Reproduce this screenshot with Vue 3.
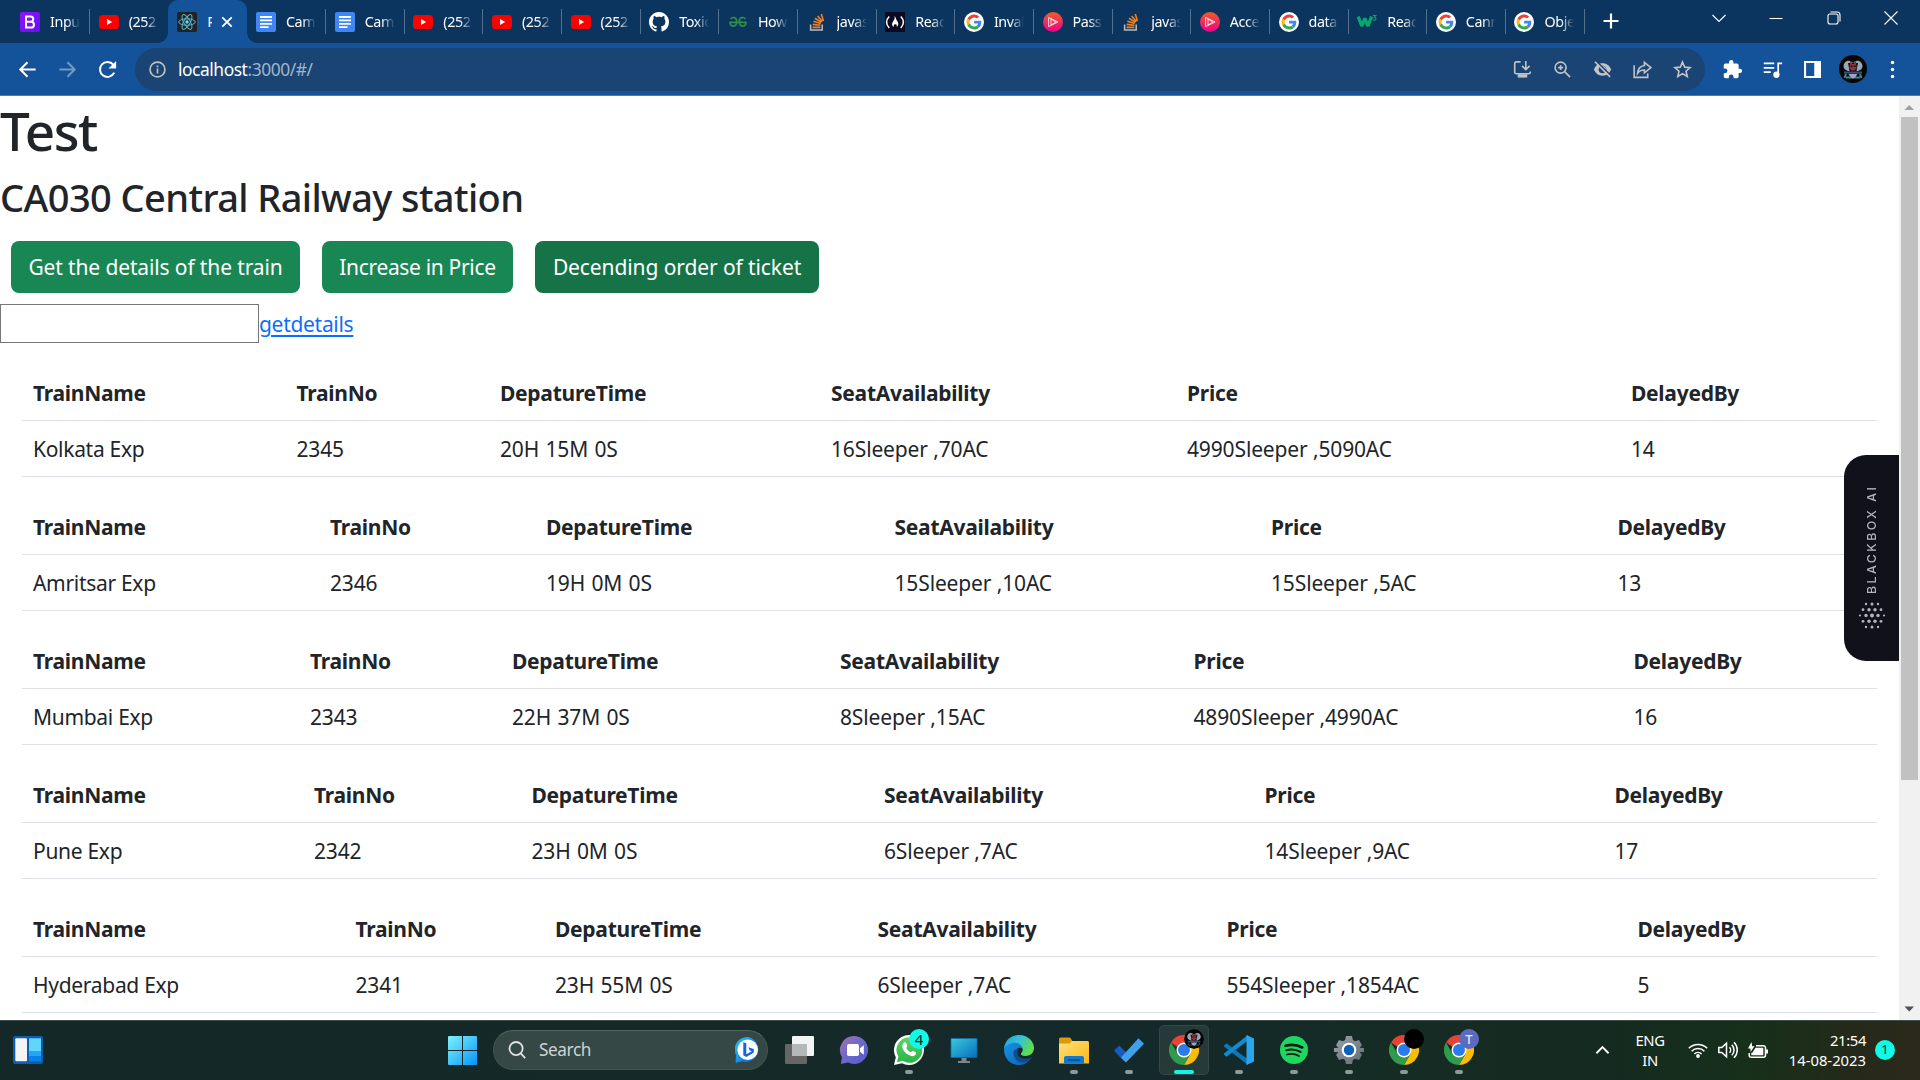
<script setup>
const tabs = [
  { icon: 'bootstrap', title: 'Inpu' },
  { icon: 'youtube', title: '(252' },
  { icon: 'react', title: 'R', active: true },
  { icon: 'docs', title: 'Cam' },
  { icon: 'docs', title: 'Cam' },
  { icon: 'youtube', title: '(252' },
  { icon: 'youtube', title: '(252' },
  { icon: 'youtube', title: '(252' },
  { icon: 'github', title: 'Toxic' },
  { icon: 'geeks', title: 'How' },
  { icon: 'stack', title: 'javas' },
  { icon: 'fcc', title: 'Reac' },
  { icon: 'google', title: 'Inval' },
  { icon: 'plural', title: 'Pass' },
  { icon: 'stack', title: 'javas' },
  { icon: 'plural', title: 'Acce' },
  { icon: 'google', title: 'data' },
  { icon: 'w3', title: 'Reac' },
  { icon: 'google', title: 'Cann' },
  { icon: 'google', title: 'Obje' },
]

const headings = ['TrainName', 'TrainNo', 'DepatureTime', 'SeatAvailability', 'Price', 'DelayedBy']

const trains = [
  { cols: [263.5, 203.5, 331, 356, 444, 257], cells: ['Kolkata Exp', '2345', '20H 15M 0S', '16Sleeper ,70AC', '4990Sleeper ,5090AC', '14'] },
  { cols: [297, 216, 348.5, 376.5, 346.5, 270.5], cells: ['Amritsar Exp', '2346', '19H 0M 0S', '15Sleeper ,10AC', '15Sleeper ,5AC', '13'] },
  { cols: [277, 202, 328, 353.5, 440, 254.5], cells: ['Mumbai Exp', '2343', '22H 37M 0S', '8Sleeper ,15AC', '4890Sleeper ,4990AC', '16'] },
  { cols: [281, 217.5, 352.5, 380.5, 350, 273.5], cells: ['Pune Exp', '2342', '23H 0M 0S', '6Sleeper ,7AC', '14Sleeper ,9AC', '17'] },
  { cols: [322.5, 199.5, 322.5, 349, 411, 250.5], cells: ['Hyderabad Exp', '2341', '23H 55M 0S', '6Sleeper ,7AC', '554Sleeper ,1854AC', '5'] },
]

const apps = [
  { icon: 'taskview' },
  { icon: 'chat' },
  { icon: 'whatsapp', running: true, badge: 'count', label: '4' },
  { icon: 'pc' },
  { icon: 'edge' },
  { icon: 'folder', running: true },
  { icon: 'todo', running: true },
  { icon: 'chrome', running: true, active: true, badge: 'avatar' },
  { icon: 'vscode', running: true },
  { icon: 'spotify', running: true },
  { icon: 'settings', running: true },
  { icon: 'chrome', running: true, badge: 'black', label: '' },
  { icon: 'chrome', running: true, badge: 'letter', label: 'T' },
]

const dots = [
  [8, 2, 1.2], [14, 2, 1.5], [20, 2, 1.2],
  [5, 7.7, 1.4], [11, 7.7, 1.7], [17, 7.7, 1.7], [23, 7.7, 1.4],
  [2, 13.5, 1.1], [8, 13.5, 1.7], [14, 13.5, 2], [20, 13.5, 1.7], [26, 13.5, 1.1],
  [5, 19.3, 1.4], [11, 19.3, 1.7], [17, 19.3, 1.7], [23, 19.3, 1.4],
  [8, 25, 1.2], [14, 25, 1.5], [20, 25, 1.2],
]
</script>

<template>
  <div class="screen">
    <svg class="sprite" width="0" height="0" aria-hidden="true">
      <defs>
        <linearGradient id="gPurple" x1="0" y1="0" x2="1" y2="1"><stop offset="0" stop-color="#9013fe" /><stop offset="1" stop-color="#6610f2" /></linearGradient>
        <linearGradient id="gPlural" x1="0" y1="0" x2="0" y2="1"><stop offset="0" stop-color="#f15b2a" /><stop offset="1" stop-color="#ec008c" /></linearGradient>
        <linearGradient id="gWin" x1="0" y1="0" x2="1" y2="1"><stop offset="0" stop-color="#7df3fb" /><stop offset="1" stop-color="#0595fb" /></linearGradient>
        <linearGradient id="gBing" x1="0" y1="0" x2="1" y2="1"><stop offset="0" stop-color="#21c8f6" /><stop offset="1" stop-color="#1257d8" /></linearGradient>
        <linearGradient id="gChat" x1="0" y1="0" x2="1" y2="1"><stop offset="0" stop-color="#a86fb0" /><stop offset=".45" stop-color="#6f6ac9" /><stop offset="1" stop-color="#5558cf" /></linearGradient>
        <linearGradient id="gWa" x1="0" y1="0" x2="0" y2="1"><stop offset="0" stop-color="#62d36b" /><stop offset="1" stop-color="#28b446" /></linearGradient>
        <linearGradient id="gPc" x1="0" y1="0" x2="1" y2="1"><stop offset="0" stop-color="#35cbd6" /><stop offset="1" stop-color="#0a6dc2" /></linearGradient>
        <linearGradient id="gEdgeTop" x1="0" y1="0" x2="1" y2=".5"><stop offset="0" stop-color="#1f9fe0" /><stop offset=".5" stop-color="#35c1d8" /><stop offset="1" stop-color="#62dc4c" /></linearGradient>
        <linearGradient id="gEdgeLow" x1="0" y1="0" x2="1" y2="1"><stop offset="0" stop-color="#1793e6" /><stop offset="1" stop-color="#0b5fae" /></linearGradient>
        <linearGradient id="gFolder" x1="0" y1="0" x2="1" y2="1"><stop offset="0" stop-color="#ffe07a" /><stop offset="1" stop-color="#fbb917" /></linearGradient>
        <linearGradient id="gGear" x1="0" y1="0" x2="1" y2="1"><stop offset="0" stop-color="#9aa2aa" /><stop offset="1" stop-color="#626a74" /></linearGradient>
      </defs>

      <symbol id="i-bootstrap" viewBox="0 0 20 20">
        <rect width="20" height="20" rx="2" fill="url(#gPurple)" />
        <path fill="none" stroke="#fff" stroke-width="2" d="M6 4.4h4.6a2.6 2.6 0 0 1 0 5.3H6m0 0h5a2.9 2.9 0 0 1 0 5.9H6zM6 3.5v13" />
      </symbol>
      <symbol id="i-youtube" viewBox="0 0 20 20">
        <rect y="3" width="20" height="14" rx="3.6" fill="#f00" />
        <path fill="#fff" d="M8 7l5.2 3L8 13z" />
      </symbol>
      <symbol id="i-react" viewBox="0 0 20 20">
        <rect width="20" height="20" rx="2" fill="#222" />
        <g fill="none" stroke="#53b7cf" stroke-width="1">
          <ellipse cx="10" cy="10" rx="8.3" ry="3.2" />
          <ellipse cx="10" cy="10" rx="8.3" ry="3.2" transform="rotate(60 10 10)" />
          <ellipse cx="10" cy="10" rx="8.3" ry="3.2" transform="rotate(120 10 10)" />
        </g>
        <circle cx="10" cy="10" r="1.7" fill="#61dafb" />
      </symbol>
      <symbol id="i-docs" viewBox="0 0 20 20">
        <rect width="20" height="20" rx="2" fill="#4285f4" />
        <path stroke="#fff" stroke-width="1.8" d="M4 5h12M4 8.4h12M4 11.8h12M4 15.2h8.5" />
      </symbol>
      <symbol id="i-github" viewBox="0 0 16 16">
        <path fill="#fff" d="M8 0C3.58 0 0 3.58 0 8c0 3.54 2.29 6.53 5.47 7.59.4.07.55-.17.55-.38 0-.19-.01-.82-.01-1.49-2.01.37-2.53-.49-2.69-.94-.09-.23-.48-.94-.82-1.13-.28-.15-.68-.52-.01-.53.63-.01 1.08.58 1.23.82.72 1.21 1.87.87 2.33.66.07-.52.28-.87.51-1.07-1.78-.2-3.64-.89-3.64-3.95 0-.87.31-1.59.82-2.15-.08-.2-.36-1.02.08-2.12 0 0 .67-.21 2.2.82.64-.18 1.32-.27 2-.27s1.36.09 2 .27c1.53-1.04 2.2-.82 2.2-.82.44 1.1.16 1.92.08 2.12.51.56.82 1.27.82 2.15 0 3.07-1.87 3.75-3.65 3.95.29.25.54.73.54 1.48 0 1.07-.01 1.93-.01 2.2 0 .21.15.46.55.38A8.01 8.01 0 0 0 16 8c0-4.42-3.58-8-8-8z" />
      </symbol>
      <symbol id="i-geeks" viewBox="0 0 20 20">
        <path fill="none" stroke="#2f8d46" stroke-width="1.7" d="M1.2 10.4h17.6M2.6 7.2a3.2 3.2 0 0 1 6 1.400v2.200a3.300 3.300 0 0 1-6.600 0M17.400 7.200a3.200 3.200 0 0 0-6 1.400v2.200a3.300 3.300 0 0 0 6.600 0" />
      </symbol>
      <symbol id="i-stack" viewBox="0 0 20 20">
        <path fill="none" stroke="#bcbbbb" stroke-width="1.5" d="M3.6 12.5v5.6h11.6v-5.6" />
        <path fill="none" stroke="#f48024" stroke-width="1.6" d="M5.500 15.400h7.800M5.700 12.400l7.600.9M6.400 9.300l7.300 2.200M8 6.300l6.500 3.900M10.700 3.900l4.700 5.600M14.300 2l2.100 7" />
      </symbol>
      <symbol id="i-fcc" viewBox="0 0 20 20">
        <rect width="20" height="20" fill="#0a0a23" />
        <path fill="none" stroke="#fff" stroke-width="1.5" d="M4.2 4.500Q-1 10 4.200 16M15.800 4.500Q21 10 15.800 16" />
        <path fill="#fff" d="M9.600 4c1.600 1.600 1.200 3.200 2.400 4.800 1.400 1.900 2.200 4.200-.4 6.200.6-1.500 0-2.500-.8-3-.2.8-.9.8-1 .1-1.300 1-1.300 2.200-.8 3.100-2.400-1.200-2.500-3.700-.9-5.700C9.300 7.900 10 6.500 9.600 4z" />
      </symbol>
      <symbol id="i-google" viewBox="0 0 20 20">
        <circle cx="10" cy="10" r="10" fill="#fff" />
        <g transform="translate(2.600 2.500) scale(.312)">
          <path fill="#EA4335" d="M24 9.500c3.540 0 6.710 1.220 9.210 3.600l6.850-6.850C35.900 2.380 30.470 0 24 0 14.620 0 6.510 5.380 2.560 13.220l7.980 6.190C12.430 13.720 17.740 9.500 24 9.500z" />
          <path fill="#4285F4" d="M46.980 24.550c0-1.570-.15-3.090-.38-4.550H24v9.020h12.940c-.58 2.960-2.260 5.480-4.780 7.180l7.730 6c4.510-4.180 7.090-10.360 7.090-17.650z" />
          <path fill="#FBBC05" d="M10.530 28.590c-.48-1.450-.76-2.990-.76-4.590s.27-3.140.76-4.590l-7.980-6.190C.92 16.460 0 20.120 0 24c0 3.880.92 7.540 2.560 10.780l7.970-6.190z" />
          <path fill="#34A853" d="M24 48c6.480 0 11.930-2.130 15.890-5.810l-7.730-6c-2.150 1.450-4.920 2.300-8.160 2.300-6.260 0-11.570-4.220-13.470-9.910l-7.980 6.190C6.510 42.620 14.620 48 24 48z" />
        </g>
      </symbol>
      <symbol id="i-plural" viewBox="0 0 20 20">
        <circle cx="10" cy="10" r="10" fill="url(#gPlural)" />
        <path fill="none" stroke="#fff" stroke-width="1" stroke-opacity=".8" d="M5.600 5.400v9.200L15 10zM8 6.800v6.400M8 7l4.800 3L8 13" />
      </symbol>
      <symbol id="i-w3" viewBox="0 0 20 20">
        <path fill="none" stroke="#04aa6d" stroke-width="3.300" stroke-linejoin="bevel" d="M1.200 4.500l3.600 9.500L7.900 6.500 11 14l3.600-9.500" />
        <path fill="none" stroke="#04aa6d" stroke-width="1.100" d="M16 3.500h2.800L17.300 5.200c2.200 0 2.200 3-.1 3-.7 0-1.200-.3-1.500-.7" />
      </symbol>

      <symbol id="i-chrome" viewBox="0 0 30 30">
        <path fill="#ea4335" d="M2 7.500A15 15 0 0 1 28 7.500H15L9 12z" />
        <path fill="#fbbc05" d="M28 7.500A15 15 0 0 1 15 30L21.500 18.700V7.500z" />
        <path fill="#2f9c4c" d="M2 7.500A15 15 0 0 0 15 30l6.500-11.300H8.500z" />
        <circle cx="15" cy="15" r="7.500" fill="#fff" />
        <circle cx="15" cy="15" r="6" fill="#2b7bea" />
      </symbol>
      <symbol id="i-taskview" viewBox="0 0 30 30">
        <rect x="1" y="9" width="22" height="20" rx="1" fill="#666" />
        <rect x="8" y="1" width="22" height="20" rx="1" fill="#f3f3f3" />
        <rect x="8" y="9" width="15" height="12" fill="#b5b8b8" />
      </symbol>
      <symbol id="i-chat" viewBox="0 0 30 30">
        <path fill="url(#gChat)" d="M15.500 1A14 14 0 1 1 9 27.600L1.800 29 3 22.200A14 14 0 0 1 15.500 1z" />
        <rect x="8" y="9" width="12" height="12" rx="1.800" fill="#fff" />
        <path fill="#fff" d="M21 13.200l3.800-3v9.600L21 16.800z" />
      </symbol>
      <symbol id="i-whatsapp" viewBox="0 0 30 30">
        <path fill="#fff" d="M15 0A15 15 0 1 1 8 28.300L0 30l1.800-7.800A15 15 0 0 1 15 0z" />
        <path fill="url(#gWa)" d="M15.200 2.200a12.800 12.800 0 1 1-6.500 23.600L3 27.200l1.400-5.500A12.800 12.800 0 0 1 15.200 2.200z" />
        <path fill="#fff" d="M10 7.700c.7-.5 1.800-.5 2.200.3l1.100 2.700c.2.700-.9 1.700-1 2.200.8 1.800 2.500 3.500 4.600 4.400.6-.2 1.300-1.700 2-1.500l2.800 1.400c.7.500.3 2-.4 2.800-1.700 1.700-4 1.400-6.500.1-3.200-1.700-5.400-4.400-6.300-7.200-.5-2.200 0-4.200 1.500-5.200z" />
      </symbol>
      <symbol id="i-pc" viewBox="0 0 30 30">
        <path fill="#7c868d" d="M12.500 22h5v4h3.500v2H9v-2h3.500z" />
        <rect x="1.500" y="3" width="27" height="20" rx="1" fill="#105a92" />
        <rect x="2.300" y="3.800" width="25.400" height="18.400" fill="url(#gPc)" />
      </symbol>
      <symbol id="i-edge" viewBox="0 0 30 30">
        <path fill="url(#gEdgeLow)" d="M0 14C2 8 7 6.500 12 7.500c4 .8 7 3.500 7 6.500-2-2-6-1.500-7.500 1.500-2 6 4 10.500 9.500 9.500l5.500-1.500C23 29 18 30.500 13 30 5 29 0 22.500 0 14z" />
        <path fill="#124b8d" d="M9.500 17c-.5 7 6 13 13 9.700 2.500-1 4.500-2.800 5.500-4.700-5 3-12.500 2.500-14.500-2.500-1-3 .5-5 1.500-5.500-3-.5-5.200 1-5.500 3z" />
        <path fill="url(#gEdgeTop)" d="M0 14C.5 5.500 7 0 15 0c9 0 15 6.500 15 13 0 5-4 8-8.500 8-3.500 0-5-1-4.500-2.500 1.500-1.500 2.200-3.500 1.500-5.500C16 5.500 4 6 0 14z" />
      </symbol>
      <symbol id="i-folder" viewBox="0 0 30 30">
        <path fill="#dd9a07" d="M0 4a1.500 1.500 0 0 1 1.500-1.500H11L13.500 6H28l2 3H0z" />
        <path fill="url(#gFolder)" d="M0 8.500h10.500L13 6h15.500A1.500 1.500 0 0 1 30 7.500v21H0z" />
        <path fill="#1079cf" d="M5 28.500V23a2 2 0 0 1 2-2h16a2 2 0 0 1 2 2v5.500z" />
        <path stroke="#084b86" stroke-width="1.500" stroke-linecap="round" d="M9.500 25h11" />
      </symbol>
      <symbol id="i-todo" viewBox="0 0 30 30">
        <path fill="#185abd" d="M0 15.500L5.200 10.500l9.600 9.500-5.200 6z" />
        <path fill="#41a0ec" d="M7 22.500L24.500 3.200 30 8.800 12 27.500z" />
      </symbol>
      <symbol id="i-vscode" viewBox="0 0 30 30">
        <path fill="#0a78be" d="M0 10.500l2.500-2.300L24 24.500V30L0 11.500z" />
        <path fill="#1389d2" d="M0 19.500l2.500 2.300L24 5.500V0L0 18.500z" />
        <path fill="#2ba5ee" d="M22.500 0L30 3.500v23L22.500 30z" />
      </symbol>
      <symbol id="i-spotify" viewBox="0 0 30 30">
        <circle cx="15" cy="15" r="14" fill="#1ed760" />
        <path fill="none" stroke="#101b14" stroke-linecap="round" stroke-width="2.600" d="M6.500 10.800c6-1.700 11.500-1 16.800 1.700" />
        <path fill="none" stroke="#101b14" stroke-linecap="round" stroke-width="2.100" d="M7.300 15.300c5-1.400 9.700-.9 14.200 1.600" />
        <path fill="none" stroke="#101b14" stroke-linecap="round" stroke-width="1.800" d="M8 19.500c4.200-1.100 8.200-.7 12 1.500" />
      </symbol>
      <symbol id="i-settings" viewBox="0 0 30 30">
        <path fill="url(#gGear)" d="M12 1h6l.9 4 2.300 1.300L25 5l3 5.200-2.500 2.500L30 13v4l-4.500.3L28 19.800 25 25l-3.800-1.300-2.300 1.300-.9 4h-6l-.9-4-2.300-1.300L5 25l-3-5.200 2.500-2.500L0 17v-4l4.500-.3L2 10.200 5 5l3.800 1.300L11.100 5z" />
        <circle cx="15" cy="15" r="7.300" fill="#fff" />
        <circle cx="15" cy="15" r="5.200" fill="#0b62b8" />
      </symbol>
      <symbol id="i-avatar" viewBox="0 0 28 28">
        <circle cx="14" cy="14" r="14" fill="#050506" />
        <path fill="#97a9b5" d="M4.500 11C5 6 9 5 11 6l3 2 3-2c2-1 6 0 6.500 5 0 3-2 4-4.500 5h-10c-2.500-1-4.500-2-4.500-5z" />
        <path fill="#1a1016" d="M9 8h10l-1.500 8h-7z" />
        <path fill="#8c3542" d="M10.800 6h1.600l.6 3h2l.6-3h1.600l-.3 4 .9 2.500-2.300 3h-3l-2.300-3 .9-2.500z" />
        <path fill="#1a1016" d="M11.500 10.500h2v1.500h-2zM14.700 10.500h2v1.500h-2z" />
        <path fill="#3b4e78" d="M5 16.500h18v2.200H5z" />
        <path fill="none" stroke="#3b8e93" d="M5.500 23l1.500-4M22.500 23L21 19M7 22.500h14" />
        <path fill="#a5a4ba" d="M9.500 19h9l-2 3-2.500 1.500L11.500 22z" />
      </symbol>
    </svg>

    <header class="tabbar">
      <div class="tabs">
        <div v-for="(tab, i) in tabs" :key="i" class="tab" :class="{ active: tab.active, plain: i === 1 }">
          <svg class="favicon"><use :href="'#i-' + tab.icon" /></svg>
          <span class="title">{{ tab.title }}</span>
          <svg v-if="tab.active" class="close" viewBox="0 0 12 12"><path d="M1.300 1.300l9.400 9.400M10.700 1.300l-9.400 9.400" /></svg>
        </div>
      </div>
      <svg class="plus" viewBox="0 0 16 16"><path d="M8 .5v15M.5 8h15" /></svg>
      <div class="controls">
        <svg viewBox="0 0 16 16"><path d="M1.500 5L8 11.500 14.500 5" /></svg>
        <svg viewBox="0 0 16 16"><path d="M1.500 8.500h13" /></svg>
        <svg viewBox="0 0 16 16"><rect x="2" y="4" width="10" height="10" rx="2" /><path d="M4.500 2h6.500a3 3 0 0 1 3 3v6.500" /></svg>
        <svg viewBox="0 0 16 16"><path d="M1.500 1.500l13 13M14.500 1.500l-13 13" /></svg>
      </div>
    </header>

    <nav class="toolbar">
      <svg class="nav" viewBox="0 0 24 24"><path d="M20.500 12H5M12 4.500L4.500 12l7.500 7.500" /></svg>
      <svg class="nav dim" viewBox="0 0 24 24"><path d="M3.500 12H19M12 4.500l7.500 7.500-7.500 7.500" /></svg>
      <svg class="nav" viewBox="0 0 24 24"><path d="M19 15.300A7.800 7.800 0 1 1 18 7" /><path class="solid" d="M21 3v8h-8z" /></svg>
      <div class="omnibox">
        <svg class="info" viewBox="0 0 16 16"><circle cx="8" cy="8" r="7" /><path d="M8 7v4.700M8 4.200v1.700" /></svg>
        <span class="url">localhost<i>:3000/#/</i></span>
        <div class="actions">
          <svg viewBox="0 0 20 20"><path d="M8 2H3.500A1.700 1.700 0 0 0 1.800 3.700v9.100a1.700 1.700 0 0 0 1.700 1.700h13a1.700 1.700 0 0 0 1.700-1.700V12M13.500 1v8.500M9.500 6.200l4 4 4-4" /><path class="fill" d="M5 15h10v3.500H5z" /></svg>
          <svg viewBox="0 0 20 20"><circle cx="8" cy="8" r="5.800" /><path d="M12.500 12.500l5.500 5.500M8 5.400v5.200M5.400 8h5.200" /></svg>
          <svg viewBox="0 0 20 20"><path class="fill" d="M10 3.500c4.400 0 7.600 2.600 9 6.500-1.400 3.900-4.600 6.500-9 6.500S2.400 13.900 1 10c1.400-3.900 4.600-6.500 9-6.500z" /><circle class="eye" cx="10" cy="10" r="4" /><path d="M10 7.200a2.900 2.900 0 0 1 2.900 2.900" /><path class="cut" d="M3.200.8l16 16" /><path d="M2 1.800l16 16" /></svg>
          <svg viewBox="0 0 20 20"><path d="M1.200 5.500v12.800h14.300v-4" /><path d="M12 2.500l6.800 5.500-6.800 5.500v-3c-3.500-.2-5.500 1-7.200 3.500.4-4.500 2.700-7.600 7.200-8.200z" /></svg>
          <svg viewBox="0 0 20 20"><path d="M10 2.200l2.300 5.300 5.700.5-4.300 3.800 1.300 5.600-5-3-5 3 1.300-5.600L2 8l5.700-.5z" /></svg>
        </div>
      </div>
      <div class="extras">
        <svg viewBox="0 0 24 24"><path class="solid" d="M20.500 11H19V7a2 2 0 0 0-2-2h-4V3.500a2.500 2.500 0 0 0-5 0V5H4a2 2 0 0 0-2 2v3.800h1.500a2.700 2.700 0 0 1 0 5.400H2V20a2 2 0 0 0 2 2h3.800v-1.500a2.700 2.700 0 0 1 5.400 0V22H17a2 2 0 0 0 2-2v-4h1.500a2.500 2.500 0 0 0 0-5z" /></svg>
        <svg viewBox="0 0 24 24"><path d="M2 5h12M2 10h12M2 15h8M18.500 18V5H23" /><circle class="solid" cx="16.500" cy="18" r="3.600" /></svg>
        <svg viewBox="0 0 24 24"><path class="thick" d="M3.500 3.500h17v17h-17z" /><path class="solid" d="M14 3h7v18h-7z" /></svg>
        <svg class="avatar"><use href="#i-avatar" /></svg>
        <svg viewBox="0 0 24 24"><circle class="solid" cx="12" cy="4" r="2" /><circle class="solid" cx="12" cy="12" r="2" /><circle class="solid" cx="12" cy="20" r="2" /></svg>
      </div>
    </nav>

    <div class="viewport">
      <main class="page">
        <h1>Test</h1>
        <h2>CA030 Central Railway station</h2>
        <div class="buttons">
          <button class="btn b1">Get the details of the train</button>
          <button class="btn b2">Increase in Price</button>
          <button class="btn b3">Decending order of ticket</button>
        </div>
        <div class="lookup">
          <input type="text" />
          <a href="#/">getdetails</a>
        </div>
        <div class="tables">
          <table v-for="train in trains" :key="train.cells[0]">
            <colgroup>
              <col v-for="(w, c) in train.cols" :key="c" :style="{ width: w + 'px' }" />
            </colgroup>
            <thead>
              <tr><th v-for="h in headings" :key="h">{{ h }}</th></tr>
            </thead>
            <tbody>
              <tr><td v-for="cell in train.cells" :key="cell">{{ cell }}</td></tr>
            </tbody>
          </table>
        </div>
      </main>
      <div class="scrollbar">
        <svg viewBox="0 0 21 21"><path fill="#a0a0a0" d="M5.500 14h9.500l-4.750-5z" /></svg>
        <div class="thumb"></div>
        <svg viewBox="0 0 21 21"><path fill="#505050" d="M5.500 7.500h9.500l-4.750 5z" /></svg>
      </div>
      <aside class="blackbox">
        <span>BLACKBOX AI</span>
        <svg viewBox="0 0 28 27"><circle v-for="(d, i) in dots" :key="i" :cx="d[0]" :cy="d[1]" :r="d[2]" /></svg>
      </aside>
    </div>

    <footer class="taskbar">
      <svg class="widgets" viewBox="0 0 30 28">
        <rect width="30" height="28" rx="2" fill="#0c5fb0" />
        <rect x="2.300" y="2.300" width="11.700" height="23" rx="1" fill="#f4f4f4" />
        <path fill="#62d5fb" d="M16 2.300h12V15H16z" />
        <path fill="#25a5f5" d="M16 15h12v5H16z" />
        <path fill="#0883e8" d="M16 20h12v5.300H16z" />
      </svg>
      <svg class="start" viewBox="0 0 29 29"><path fill="url(#gWin)" d="M0 1a1 1 0 0 1 1-1h13v14H0zM15 0h13a1 1 0 0 1 1 1v13H15zM0 15h14v14H1a1 1 0 0 1-1-1zM15 15h14v13a1 1 0 0 1-1 1H15z" /></svg>
      <div class="search">
        <svg class="lens" viewBox="0 0 20 20"><circle cx="8.500" cy="8.500" r="6.900" /><path d="M13.500 13.500l4.500 5" /></svg>
        <span>Search</span>
        <svg class="bing" viewBox="0 0 25 26">
          <path fill="url(#gBing)" d="M12.500 0A12.500 12.500 0 1 1 7 24.300L.6 26 1 18A12.500 12.500 0 0 1 12.500 0z" />
          <circle cx="12.700" cy="12.700" r="10.300" fill="#fff" />
          <path fill="#1464dc" d="M8.300 5.200l3 1v11l5.500-3-2.200-1-1.200-3 5.400 1.900v3.300L11.300 20l-3-1.800z" />
        </svg>
      </div>
      <div class="apps">
        <div v-for="(app, i) in apps" :key="i" class="app" :class="{ active: app.active, running: app.running }">
          <svg class="app-icon"><use :href="'#i-' + app.icon" /></svg>
          <svg v-if="app.badge === 'avatar'" class="badge"><use href="#i-avatar" /></svg>
          <span v-else-if="app.badge" class="badge" :class="app.badge">{{ app.label }}</span>
        </div>
      </div>
      <div class="tray">
        <svg class="up" viewBox="0 0 16 10"><path d="M1.500 8.500L8 2l6.500 6.500" /></svg>
        <div class="lang"><span>ENG</span><span>IN</span></div>
        <svg class="wifi" viewBox="0 0 20 16"><path d="M.8 6.200a13 13 0 0 1 18.400 0M3.600 9.200a9 9 0 0 1 12.800 0M6.400 11.900a5.200 5.200 0 0 1 7.200 0" /><circle cx="10" cy="14" r="1.900" /></svg>
        <svg class="volume" viewBox="0 0 20 18"><path d="M.8 6.500v5h3l4.700 4.300V2.200L3.800 6.500zM11.500 6.200a4 4 0 0 1 0 5.600M13.800 3.700a7.500 7.500 0 0 1 0 10.600M16 1.200a11 11 0 0 1 0 15.600" /></svg>
        <svg class="battery" viewBox="0 0 20 17"><path d="M8 3.700h7.500a2 2 0 0 1 2 2v7.600a2 2 0 0 1-2 2H3.200a2 2 0 0 1-2-2V11" /><path class="fill" d="M7.500 5.800h7.800v7.400H3.300v-2.500h1zM18 7.500h2v4h-2zM3.500 0L0 6.500h2.500V10l4-5.700H4.200z" /></svg>
        <div class="clock"><span>21:54</span><span class="date">14-08-2023</span></div>
        <span class="notice">1</span>
      </div>
    </footer>
  </div>
</template>

<style>
html, body { margin: 0; overflow: hidden; background: #fff; }
</style>

<style scoped>
* { box-sizing: border-box; }
.screen {
  width: 1920px;
  height: 1080px;
  display: flex;
  flex-direction: column;
  overflow: hidden;
  font-family: "Noto Sans", "Open Sans", sans-serif;
  color: #212529;
}
.sprite { position: absolute; }
svg { display: block; flex: none; }

/* browser chrome */
.tabbar { height: 43px; flex: none; display: flex; background: #0b355f; color: #fff; }
.tabs { display: flex; width: 1586px; padding-left: 11px; flex: none; }
.tab {
  position: relative;
  width: 78.67px;
  flex: none;
  display: flex;
  align-items: center;
  padding-left: 9px;
}
.tab::after {
  content: "";
  position: absolute;
  right: -.5px;
  top: 9px;
  width: 1px;
  height: 25px;
  background: #53708f;
}
.tab.plain::after { display: none; }
.favicon { width: 20px; height: 20px; }
.title {
  margin-left: 10px;
  width: 30px;
  overflow: hidden;
  white-space: nowrap;
  font-size: 14.3px;
  line-height: 22px;
  letter-spacing: -.4px;
  -webkit-mask-image: linear-gradient(90deg, #000 55%, transparent);
  mask-image: linear-gradient(90deg, #000 55%, transparent);
}
.tab.active { background: #145299; border-radius: 10px 10px 0 0; }
.tab.active .title { width: 5px; -webkit-mask-image: none; mask-image: none; }
.tab.active::before, .tab.active::after {
  content: "";
  position: absolute;
  top: auto;
  bottom: 0;
  width: 10px;
  height: 10px;
}
.tab.active::before { left: -10px; background: radial-gradient(circle at 0 0, transparent 9.5px, #145299 10px); }
.tab.active::after { right: -10px; background: radial-gradient(circle at 100% 0, transparent 9.5px, #145299 10px); }
.close { width: 12px; height: 12px; margin-left: 9px; fill: none; stroke: #fff; stroke-width: 1.9; }
.plus { width: 16px; height: 16px; margin: 13px 0 0 17px; stroke: #fff; stroke-width: 2.2; }
.controls { display: flex; margin-left: auto; margin-right: 21px; gap: 41.3px; padding-top: 10px; }
.controls svg { width: 16px; height: 16px; fill: none; stroke: #fff; stroke-width: 1.1; }

.toolbar {
  height: 53px;
  flex: none;
  display: flex;
  align-items: center;
  background: #145299;
  border-bottom: 1px solid #4a7ab4;
  padding-left: 16px;
}
.nav { width: 23px; height: 23px; fill: none; stroke: #fff; stroke-width: 2.1; margin-right: 17px; }
.nav.dim { stroke: #7299c6; }
.solid { fill: #fff; stroke: none; }
.omnibox {
  width: 1570px;
  height: 43px;
  flex: none;
  display: flex;
  align-items: center;
  border-radius: 22px;
  background: #194474;
  margin-left: -1px;
  padding: 0 13px 0 14px;
}
.info { width: 17px; height: 17px; fill: none; stroke: #c1c1c1; stroke-width: 1.6; }
.url { margin-left: 12px; font-size: 17.4px; line-height: 26px; color: #fff; letter-spacing: -.45px; }
.url i { font-style: normal; color: #a3b4c7; }
.actions { display: flex; gap: 21px; margin-left: auto; }
.actions svg { width: 19px; height: 19px; fill: none; stroke: #c1c3c6; stroke-width: 1.7; }
.actions .fill { fill: #c1c3c6; stroke: none; }
.actions .eye { fill: #194474; stroke: none; }
.actions .cut { stroke: #194474; }
.extras { display: flex; align-items: center; gap: 19px; margin-left: 17px; }
.extras svg { width: 21px; height: 21px; fill: none; stroke: #fff; stroke-width: 2; }
.extras .thick { stroke-width: 2.4; }
.extras .avatar { width: 28px; height: 28px; stroke: none; margin: 0 -3.5px; }

/* web page */
.viewport { position: relative; height: 924px; flex: none; display: flex; background: #fff; overflow: hidden; }
.page { width: 1899px; height: 924px; overflow: hidden; }
h1, h2 { margin: 0; font-weight: 500; white-space: nowrap; }
h1 { height: 66px; line-height: 70px; font-size: 53px; letter-spacing: -1.4px; margin-bottom: 11px; }
h2 { height: 47px; line-height: 48px; font-size: 38px; letter-spacing: -.6px; margin-bottom: 21px; }
.buttons { display: flex; gap: 22px; padding-left: 11px; }
.btn {
  height: 52px;
  border: 0;
  border-radius: 8px;
  background: #198754;
  color: #fff;
  font: 400 21px/50px "Noto Sans", sans-serif;
  padding: 0;
  white-space: nowrap;
}
.b1 { width: 289px; letter-spacing: -.13px; }
.b2 { width: 191px; letter-spacing: -.33px; }
.b3 { width: 284px; letter-spacing: -.1px; background: #157347; }
.lookup { display: flex; margin-top: 11px; height: 39px; }
.lookup input { width: 259px; height: 39px; border: 1px solid #767676; border-radius: 0; padding: 0; background: #fff; }
.lookup a {
  color: #0d6efd;
  font-size: 21px;
  line-height: 41px;
  letter-spacing: -.3px;
  text-decoration-thickness: 1.5px;
  text-underline-offset: 3px;
}
.tables { padding: 22px 22px 0; }
table { width: 1855px; table-layout: fixed; border-collapse: separate; border-spacing: 0; margin-bottom: 22px; }
th, td {
  height: 56px;
  padding: 2px 0 0 11px;
  border-bottom: 1px solid #dee2e6;
  text-align: left;
  font-size: 21px;
  line-height: 33px;
  white-space: nowrap;
}
th { font-weight: 700; letter-spacing: -.27px; }
td { letter-spacing: -.14px; }
td:first-child { letter-spacing: -.3px; }
td:nth-child(3) { word-spacing: 1px; }
.scrollbar { width: 21px; background: #f1f1f1; display: flex; flex-direction: column; }
.scrollbar svg { width: 21px; height: 21px; }
.thumb { height: 663px; width: 17px; margin: 0 auto auto 2px; background: #c1c1c1; }
.blackbox {
  position: absolute;
  left: 1844px;
  top: 359px;
  width: 55px;
  height: 206px;
  border-radius: 22px 0 0 22px;
  background: #11111a;
  display: flex;
  flex-direction: column;
  align-items: center;
}
.blackbox span {
  margin-top: 29px;
  height: 110px;
  writing-mode: vertical-rl;
  transform: rotate(180deg);
  font: 500 12.3px/16px Inter, sans-serif;
  letter-spacing: 2.5px;
  color: #b5b5b8;
  white-space: nowrap;
}
.blackbox svg { width: 28px; height: 27px; margin-top: 8px; fill: #b5b5b8; }

/* taskbar */
.taskbar {
  height: 60px;
  flex: none;
  display: flex;
  align-items: center;
  padding-bottom: 1px;
  border-top: 1px solid #3d4f4a;
  background: linear-gradient(90deg, #142927 0, #152a28 42%, #14292a 60%, #152c24 74%, #152a20 84%, #16301a 91%, #26291a 97%, #2b291b 100%);
  color: #fff;
}
.widgets { width: 30px; height: 28px; margin-left: 13px; }
.start { width: 29px; height: 29px; margin-left: 405px; }
.search {
  width: 275px;
  height: 40px;
  flex: none;
  margin-left: 16px;
  border-radius: 20px;
  background: #354845;
  border: 1px solid #43544f;
  border-top-color: #55645f;
  display: flex;
  align-items: center;
  padding: 0 7px 0 14px;
}
.lens { width: 19px; height: 20px; fill: none; stroke: #dfe3e2; stroke-width: 1.9; }
.search span { margin-left: 12px; font-size: 17.2px; line-height: 24px; color: #cdd3d1; letter-spacing: -.4px; }
.bing { width: 25px; height: 26px; margin-left: auto; }
.apps { display: flex; margin-left: 3px; }
.app { position: relative; width: 55px; height: 50px; display: flex; align-items: center; justify-content: center; flex: none; }
.app-icon { width: 30px; height: 30px; position: relative; }
.app.active::before {
  content: "";
  position: absolute;
  inset: 0 2.5px;
  border-radius: 5px;
  background: #ffffff14;
  border: 1px solid #ffffff12;
}
.app.running::after {
  content: "";
  position: absolute;
  left: 23.5px;
  top: 45px;
  width: 8px;
  height: 4px;
  border-radius: 2px;
  background: #8f9a98;
}
.app.active::after { left: 17.5px; width: 20px; background: #12f5e6; }
.badge {
  position: absolute;
  left: 28px;
  top: 4px;
  width: 20px;
  height: 20px;
  border-radius: 50%;
  text-align: center;
  font-size: 15px;
  line-height: 20px;
}
.badge.count { background: #14f8e6; color: #10231f; }
.badge.black { background: #000; }
.badge.letter { background: #5c6bc0; color: #e4e7f6; font-size: 13px; font-weight: 500; }
.tray { display: flex; align-items: center; margin-left: 109px; }
.tray svg { fill: none; stroke: #fff; stroke-width: 1.5; }
.tray .up { width: 15px; height: 10px; stroke-width: 2; }
.lang { width: 40px; margin-left: 20px; display: flex; flex-direction: column; align-items: center; }
.lang span, .clock span { font-size: 14.8px; line-height: 20px; letter-spacing: -.35px; }
.clock .date { letter-spacing: 0; }
.wifi { width: 20px; height: 16px; margin-left: 18px; }
.tray .wifi circle { fill: #fff; stroke: none; }
.volume { width: 20px; height: 18px; margin-left: 10px; }
.battery { width: 20px; height: 17px; margin-left: 10px; }
.tray .fill { fill: #fff; stroke: none; }
.clock { width: 90px; margin-left: 8px; display: flex; flex-direction: column; align-items: flex-end; }
.notice {
  width: 20px;
  height: 20px;
  margin-left: 9px;
  border-radius: 50%;
  background: #14f8e6;
  color: #10231f;
  font-size: 13px;
  line-height: 19px;
  text-align: center;
}
</style>
